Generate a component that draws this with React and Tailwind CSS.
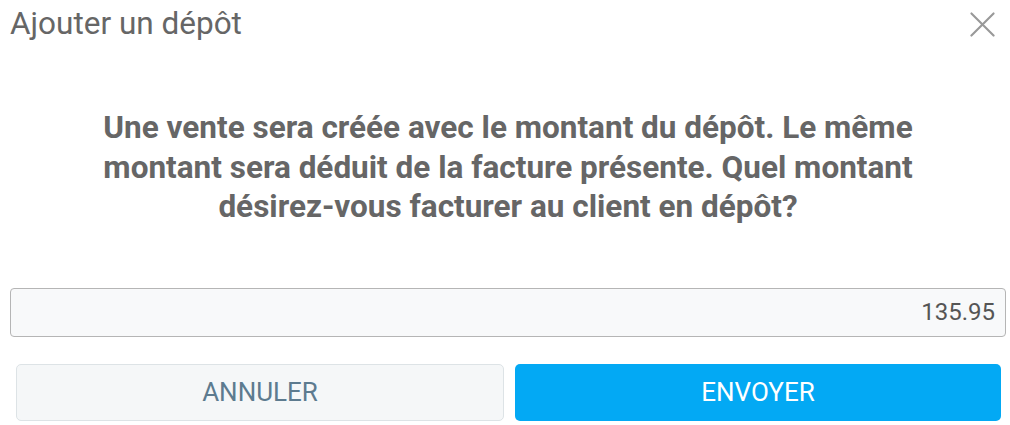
export default function App() {
    return (
        <div className="w-[1010px] h-[425px] bg-white overflow-hidden font-['Roboto',sans-serif]">
            {/* Header */}
            <div className="flex items-start justify-between pl-[10px] pr-[15px] pt-[8px] h-[48px]">
                <h1 className="text-[31.5px] leading-none text-[#666666]">Ajouter un dépôt</h1>
                <button type="button" className="mt-[4px] text-[#999999]">
                    <svg width="25" height="25" viewBox="0 0 26 26" fill="none" stroke="currentColor" strokeWidth="2.2" strokeLinecap="round">
                        <path d="M1.5 1.5 L24.5 24.5 M24.5 1.5 L1.5 24.5" />
                    </svg>
                </button>
            </div>

            {/* Message */}
            <div className="mt-[60px] pl-[97px] pr-[91px]">
                <p className="text-center text-[31.5px] leading-[39.5px] font-bold text-[#666666]">
                    Une vente sera créée avec le montant du dépôt. Le même montant sera déduit de la facture présente. Quel montant désirez-vous facturer au client en dépôt?
                </p>
            </div>

            {/* Montant */}
            <div className="mt-[61px] pl-[10px] pr-[4px]">
                <input
                    type="text"
                    defaultValue="135.95"
                    className="block w-full h-[49px] rounded-[4px] border border-[#b5b5b5] bg-[#f8f9fa] px-[10px] text-right text-[24px] text-[#555555] outline-none"
                />
            </div>

            {/* Boutons */}
            <div className="mt-[27px] flex gap-[11px] pl-[16px] pr-[9px]">
                <button
                    type="button"
                    className="flex-1 h-[57px] rounded-[5px] border border-[#dde3e6] bg-[#f5f7f8] text-[26px] uppercase text-[#5d7b8f]"
                >
                    Annuler
                </button>
                <button
                    type="button"
                    className="flex-1 h-[57px] rounded-[5px] bg-[#03a9f4] text-[26px] uppercase text-white"
                >
                    Envoyer
                </button>
            </div>
        </div>
    );
}
